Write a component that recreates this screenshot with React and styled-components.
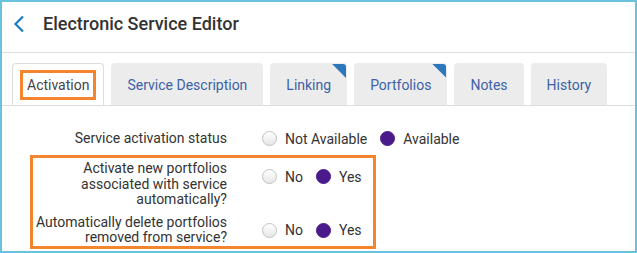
import React from 'react';
import styled, { createGlobalStyle } from 'styled-components';

const GlobalStyle = createGlobalStyle`
  html, body {
    margin: 0;
    padding: 0;
    background: #fff;
  }
  body {
    font-family: Roboto, "Liberation Sans", Arial, sans-serif;
    color: #333;
  }
`;

const Frame = styled.div`
  box-sizing: border-box;
  width: 637px;
  height: 253px;
  border: 2px solid #68c2df;
  background: #fff;
  overflow: hidden;
`;

const Header = styled.div`
  box-sizing: border-box;
  height: 51px;
  padding: 0 0 7px 11px;
  display: flex;
  align-items: center;
  gap: 18px;
  border-bottom: 1px solid #dedede;
`;

const BackButton = styled.button`
  border: none;
  background: none;
  padding: 0;
  display: flex;
  cursor: pointer;
`;

const Title = styled.h1`
  margin: 0;
  font-size: 18px;
  font-weight: 500;
  color: #333;
  letter-spacing: 0;
`;

const TabBar = styled.div`
  display: flex;
  gap: 7px;
  margin-top: 10px;
  padding-left: 10px;
  border-bottom: 1px solid #dedede;
`;

const Tab = styled.div`
  position: relative;
  box-sizing: border-box;
  height: 42px;
  display: flex;
  align-items: center;
  padding: 0 ${p => (p.$active ? '7px' : '15px')};
  font-size: 14px;
  color: ${p => (p.$active ? '#444' : '#3d62a7')};
  background: ${p => (p.$active ? '#fff' : '#ececec')};
  border: 1px solid ${p => (p.$active ? '#dcdcdc' : '#ececec')};
  border-bottom: none;
  border-radius: 4px 4px 0 0;
  overflow: hidden;
  cursor: pointer;
`;

const Corner = styled.span`
  position: absolute;
  top: 0;
  right: 0;
  width: 14px;
  height: 14px;
  background: #2f77bd;
  clip-path: polygon(0 0, 100% 0, 100% 100%);
`;

const Focus = styled.span`
  padding: 4px 4px;
  line-height: 16px;
  border: 3px solid #f5842e;
`;

const Form = styled.div`
  padding: 17px 0 0 28px;
`;

const Group = styled.div`
  box-sizing: border-box;
  width: ${p => (p.$highlight ? '346px' : 'auto')};
  border-style: solid;
  border-color: ${p => (p.$highlight ? '#f5842e' : 'transparent')};
  border-width: ${p => (p.$highlight ? '3px' : '0 3px')};
  padding: ${p => (p.$highlight ? '3px 0 0' : '0')};
  margin-top: ${p => (p.$highlight ? '1px' : '0')};
  display: flex;
  flex-direction: column;
  gap: 7px;
`;

const Row = styled.div`
  display: flex;
  align-items: flex-start;
  gap: 35px;
`;

const Label = styled.div`
  flex-shrink: 0;
  box-sizing: border-box;
  width: 194px;
  min-height: 31px;
  display: flex;
  align-items: center;
  justify-content: flex-end;
  text-align: right;
  font-size: 14px;
  line-height: 15.5px;
  color: #333;
`;

const Options = styled.div`
  height: 31px;
  display: flex;
  align-items: center;
  white-space: nowrap;
`;

const Option = styled.label`
  display: flex;
  align-items: center;
  gap: 8px;
  margin-right: 13px;
  font-size: 14px;
  color: #333;
  cursor: pointer;
`;

const Dot = styled.span`
  box-sizing: border-box;
  width: 15px;
  height: 15px;
  border-radius: 50%;
  flex-shrink: 0;
  background: ${p => (p.$checked ? '#4a1a8b' : 'linear-gradient(#ffffff, #e6e6e6)')};
  border: 1px solid ${p => (p.$checked ? '#4a1a8b' : '#c2c2c2')};
`;

const tabs = [
  { name: 'Activation', active: true },
  { name: 'Service Description' },
  { name: 'Linking', marked: true },
  { name: 'Portfolios', marked: true },
  { name: 'Notes' },
  { name: 'History' },
];

function Choice({ left, right }) {
  return (
    <Options>
      <Option><Dot />{left}</Option>
      <Option><Dot $checked />{right}</Option>
    </Options>
  );
}

export default function App() {
  return (
    <>
      <GlobalStyle />
      <Frame>
        <Header>
          <BackButton aria-label="Back">
            <svg width="12" height="18" viewBox="0 0 12 18">
              <polyline points="10,1.5 2.5,9 10,16.5" fill="none" stroke="#1f7cc3" strokeWidth="2.2" />
            </svg>
          </BackButton>
          <Title>Electronic Service Editor</Title>
        </Header>

        <TabBar>
          {tabs.map(t => (
            <Tab key={t.name} $active={t.active}>
              {t.active ? <Focus>{t.name}</Focus> : t.name}
              {t.marked && <Corner />}
            </Tab>
          ))}
        </TabBar>

        <Form>
          <Group>
            <Row>
              <Label>Service activation status</Label>
              <Choice left="Not Available" right="Available" />
            </Row>
          </Group>
          <Group $highlight>
            <Row>
              <Label>Activate new portfolios associated with service automatically?</Label>
              <Choice left="No" right="Yes" />
            </Row>
            <Row>
              <Label>Automatically delete portfolios removed from service?</Label>
              <Choice left="No" right="Yes" />
            </Row>
          </Group>
        </Form>
      </Frame>
    </>
  );
}
